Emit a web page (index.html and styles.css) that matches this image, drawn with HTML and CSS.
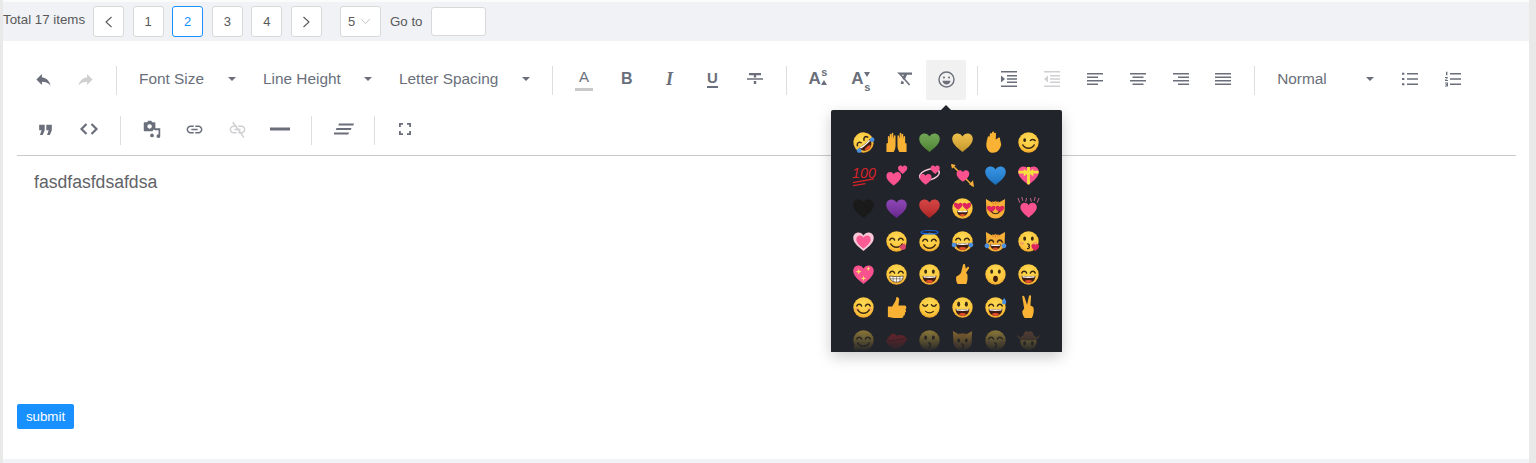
FILE: index.html
```html
<!DOCTYPE html>
<html lang="en">
<head>
    <meta charset="UTF-8">
    <meta name="viewport" content="width=device-width, initial-scale=1.0">
    <title>Editor</title>
    <link rel="stylesheet" href="styles.css">
</head>
<body>
    <!-- shared pieces for the emoji panel -->
    <svg class="defs" aria-hidden="true">
        <defs>
            <radialGradient id="skin" cx="50%" cy="35%" r="70%">
                <stop offset="0" stop-color="#fedb55"/>
                <stop offset="0.7" stop-color="#fbc53c"/>
                <stop offset="1" stop-color="#ee9a25"/>
            </radialGradient>
            <linearGradient id="shade" x1="0" y1="0" x2="0" y2="1">
                <stop offset="0" stop-color="#fff" stop-opacity=".12"/>
                <stop offset="1" stop-color="#000" stop-opacity=".18"/>
            </linearGradient>
            <g id="face"><circle cx="12" cy="12" r="10.6" fill="url(#skin)"/></g>
            <g id="cat"><path d="M2 2l6 3.4a12 12 0 0 1 8 0L22 2l-.4 9.5C22 18 18 22.5 12 22.5S2 18 2.400 11.500z" fill="#f6b037"/><path d="M12 4v4M9 4.500l.7 3M15 4.500l-.7 3M2.500 13l3 .6M21.500 13l-3 .6" stroke="#d9822b" fill="none"/></g>
            <g id="heart"><path d="M12 22C5 16.500 1.300 12.800 1.300 8.200 1.300 4.900 3.800 2.600 6.800 2.600c2.100 0 4 1.100 5.200 3.100 1.200-2 3.100-3.100 5.200-3.100 3 0 5.500 2.300 5.500 5.600 0 4.600-3.700 8.300-10.700 13.800z"/></g>
            <g id="eyes-dot" fill="#3b2a14"><ellipse cx="8" cy="9" rx="1.500" ry="2.200"/><ellipse cx="16" cy="9" rx="1.500" ry="2.200"/></g>
            <g id="eyes-arc" fill="none" stroke="#3b2a14" stroke-width="1.600" stroke-linecap="round"><path d="M5 10.500c1-2.600 4-2.600 5 0M14 10.500c1-2.600 4-2.600 5 0"/></g>
            <g id="eyes-down" fill="none" stroke="#3b2a14" stroke-width="1.400" stroke-linecap="round"><path d="M5 9c1 2.200 4 2.200 5 0M14 9c1 2.200 4 2.200 5 0"/></g>
            <g id="mouth-open"><path d="M4.800 13.300c4.800 1.100 9.600 1.100 14.400 0 0 4.600-3.200 7.500-7.200 7.500s-7.200-2.900-7.200-7.500z" fill="#3f1d12"/><path d="M5.600 13.500c4 .8 8.800.8 12.800 0l-.3 1.700c-4 .6-8.200.6-12.200 0z" fill="#fff"/><path d="M8 18.800c2.400-1.500 5.600-1.500 8 0-2.400 2.600-5.600 2.600-8 0z" fill="#e8502f"/></g>
            <g id="mouth-smile"><path d="M6 14.500c2.600 4.600 9.400 4.600 12 0" fill="none" stroke="#3b2a14" stroke-width="1.500" stroke-linecap="round"/></g>
            <g id="mouth-kiss"><path d="M11 14.500c2.500.3 2.500 2.300.6 2.500 2 .3 2 2.300-.6 2.500" fill="none" stroke="#3b2a14" stroke-width="1.300" stroke-linecap="round"/></g>
            <g id="heart-eyes" fill="#e0245e"><path d="M7.500 13.300C4.800 11.300 3 9.800 3 8c0-2 2.800-2.700 4.500-.6C9.200 5.300 12 6 12 8c0 1.800-1.800 3.300-4.500 5.300z"/><path d="M16.500 13.300C13.800 11.300 12 9.800 12 8c0-2 2.800-2.700 4.500-.6C18.200 5.300 21 6 21 8c0 1.800-1.800 3.300-4.500 5.300z"/></g>
            <g id="tears" fill="#4a8fe0"><path d="M1 14c1.500-1.300 3.700-1 4.600 1 .5 2-1.500 3.500-3.300 2.800C.8 17.200.4 15.500 1 14z"/><path d="M23 14c-1.500-1.300-3.700-1-4.600 1-.5 2 1.500 3.500 3.300 2.800 1.500-.6 1.900-2.300 1.300-3.800z"/></g>
            <g id="cheeks" fill="#f3827a" opacity=".55"><ellipse cx="5.200" cy="14" rx="2.300" ry="1.500"/><ellipse cx="18.800" cy="14" rx="2.300" ry="1.500"/></g>
            <g id="hand" fill="#f9b233"><path d="M5 21C2 18 2 14 3 10l1-4c.3-1 1.800-.7 1.700.5l.5-3.500c.2-1.200 2-1 2 .2l.3-2c.2-1.200 2-1 2 .2l.2 1c.4-1 1.900-.6 1.800.5l-.2 6 3-2c1-.6 2 .6 1.300 1.500L18 14c-1 4-3 7-5 8-3 1-6 1-8-1z"/></g>
            <g id="raised" fill="#f9b233"><path d="M1.500 22V13l1.500-.5V6c0-1 1.600-1 1.700 0l.3 3V3.500c0-1 1.600-1 1.700 0L7 8V2.500c0-1 1.700-1 1.700 0V8l.8-3c.3-1 1.700-.7 1.500.4V15c0 3-1 5-2 7z"/></g>
        </defs>
    </svg>

    <div class="page">
        <div class="pager">
            <span class="pager-total">Total 17 items</span>
            <a class="page-item"><svg class="pager-arrow" viewBox="0 0 12 12"><path d="M8.500 1L3 6l5.500 5"/></svg></a>
            <a class="page-item">1</a>
            <a class="page-item active">2</a>
            <a class="page-item">3</a>
            <a class="page-item">4</a>
            <a class="page-item"><svg class="pager-arrow" viewBox="0 0 12 12"><path d="M3.500 1L9 6l-5.500 5"/></svg></a>
            <div class="page-size">5<svg class="size-arrow" viewBox="0 0 12 8"><path d="M1 1l5 5.500L11 1"/></svg></div>
            <span class="goto-label">Go to</span>
            <input class="goto-input" type="text">
        </div>

        <div class="content">
            <div class="toolbar">
                <div class="tool-row">
                    <button class="tool-btn first"><svg class="icon m" viewBox="0 0 24 24"><path d="M10 9V5l-7 7 7 7v-4.100c5 0 8.500 1.600 11 5.100-1-5-4-10-11-11z"/></svg></button>
                    <button class="tool-btn tight disabled"><svg class="icon m" viewBox="0 0 24 24"><path d="M14 9V5l7 7-7 7v-4.100c-5 0-8.500 1.600-11 5.100 1-5 4-10 11-11z"/></svg></button>
                    <span class="sep near"></span>
                    <button class="tool-drop font-size">Font Size<i class="caret"></i></button>
                    <button class="tool-drop line-height">Line Height<i class="caret"></i></button>
                    <button class="tool-drop letter-spacing">Letter Spacing<i class="caret"></i></button>
                    <span class="sep"></span>
                    <button class="tool-btn"><span class="glyph color-a">A</span></button>
                    <button class="tool-btn"><span class="glyph bold-b">B</span></button>
                    <button class="tool-btn"><span class="glyph italic-i">I</span></button>
                    <button class="tool-btn"><span class="glyph under-u">U</span></button>
                    <button class="tool-btn"><svg class="icon" viewBox="0 0 16 16"><path d="M2 2h12v2.200H9.200V6.500H6.800V4.200H2zM0 7.300h16v1.500H0zM6.800 10h2.400v3H6.800z"/></svg></button>
                    <span class="sep"></span>
                    <button class="tool-btn"><span class="glyph script-a">A<sup>s</sup><i class="mini-up"></i></span></button>
                    <button class="tool-btn"><span class="glyph script-a">A<sub>s</sub><i class="mini-down"></i></span></button>
                    <button class="tool-btn"><svg class="icon" viewBox="0 0 16 16"><path d="M1 1.500h15v2.200h-5L8.500 9.500 6.300 7.400l1.500-3.700H3.500L1 1.500zM4.800 11.800l1-2.400 2.200 2.100-.6 1.500H4.800zM2.500 2.500l1.200-1.100 10.500 12.100-1.200 1.100z"/></svg></button>
                    <div class="emoji-wrap">
                        <button class="tool-btn selected"><svg class="icon outline m" viewBox="0 0 24 24"><circle cx="12" cy="12" r="9.500"/><circle class="dot" cx="8.800" cy="9.500" r="1.300"/><circle class="dot" cx="15.200" cy="9.500" r="1.300"/><path class="dot" d="M6.800 13.500h10.400c-.5 3-2.700 4.700-5.200 4.700s-4.700-1.700-5.200-4.700z"/></svg></button>
                        <div class="emoji-panel">
                            <div class="emoji-grid">
                                <svg class="emoji" viewBox="0 0 24 24"><g transform="rotate(-40 12 12)"><use href="#face"/><use href="#eyes-arc"/><use href="#mouth-open"/><use href="#tears"/></g></svg>
                                <svg class="emoji" viewBox="0 0 24 24"><use href="#raised"/><use href="#raised" transform="matrix(-1 0 0 1 24 0)"/></svg>
                                <svg class="emoji green" viewBox="0 0 24 24"><use href="#heart" fill="currentColor"/><use href="#heart" fill="url(#shade)"/></svg>
                                <svg class="emoji gold" viewBox="0 0 24 24"><use href="#heart" fill="currentColor"/><use href="#heart" fill="url(#shade)"/></svg>
                                <svg class="emoji" viewBox="0 0 24 24"><use href="#hand"/></svg>
                                <svg class="emoji" viewBox="0 0 24 24"><use href="#face"/><ellipse cx="8" cy="9.500" rx="1.500" ry="2" fill="#3b2a14"/><path d="M14 10c1.500-1.500 3-1.500 5 0" fill="none" stroke="#3b2a14" stroke-width="1.500" stroke-linecap="round"/><use href="#mouth-smile"/></svg>

                                <svg class="emoji" viewBox="0 0 24 24"><text class="hundred" x="0" y="15">100</text><path d="M1 19.500L23 15.500M1 22.500L14 20.500" stroke="#d8232a" stroke-width="1.300" fill="none"/></svg>
                                <svg class="emoji pink" viewBox="0 0 24 24"><use href="#heart" fill="currentColor" transform="translate(.5 6.500) scale(.72)"/><use href="#heart" fill="currentColor" transform="translate(13 .5) scale(.45)"/></svg>
                                <svg class="emoji pink" viewBox="0 0 24 24"><ellipse cx="12" cy="11" rx="10.500" ry="5.500" fill="none" stroke="#f9c8d8" stroke-width="1.600" transform="rotate(-15 12 11)"/><use href="#heart" fill="currentColor" transform="translate(1 9) scale(.58)"/><use href="#heart" fill="currentColor" transform="translate(12.500 .5) scale(.45)"/></svg>
                                <svg class="emoji pink" viewBox="0 0 24 24"><path d="M1 1l22 22" stroke="#f6b037" stroke-width="1.500"/><path d="M0 0l5 1-4 4zM19 21l4-4 1 7z" fill="#f6b037"/><use href="#heart" fill="currentColor" transform="translate(5 5) scale(.62)"/></svg>
                                <svg class="emoji blue" viewBox="0 0 24 24"><use href="#heart" fill="currentColor"/><use href="#heart" fill="url(#shade)"/></svg>
                                <svg class="emoji pink" viewBox="0 0 24 24"><use href="#heart" fill="currentColor"/><path d="M1.500 7h21v3h-21zM10.500 3h3v18h-3z" fill="#f6e13f"/><path d="M12 9L7 5v8zM12 9l5-4v8z" fill="#f6e13f"/></svg>

                                <svg class="emoji black" viewBox="0 0 24 24"><use href="#heart" fill="currentColor"/></svg>
                                <svg class="emoji purple" viewBox="0 0 24 24"><use href="#heart" fill="currentColor"/><use href="#heart" fill="url(#shade)"/></svg>
                                <svg class="emoji red" viewBox="0 0 24 24"><use href="#heart" fill="currentColor"/><use href="#heart" fill="url(#shade)"/></svg>
                                <svg class="emoji" viewBox="0 0 24 24"><use href="#face"/><use href="#heart-eyes"/><use href="#mouth-open" transform="translate(2.400 3.500) scale(.8)"/></svg>
                                <svg class="emoji" viewBox="0 0 24 24"><use href="#cat"/><use href="#heart-eyes" transform="translate(0 3)"/><use href="#mouth-smile" transform="translate(3.600 5) scale(.7)"/></svg>
                                <svg class="emoji pink" viewBox="0 0 24 24"><use href="#heart" fill="currentColor" transform="translate(2.500 4) scale(.8)"/><path d="M3 6L1 1M6 4L5 0M9 5l1-4M15 5l-1-4M18 4l1-4M21 6l2-5" stroke="#c86a8c" stroke-width="1"/></svg>

                                <svg class="emoji" viewBox="0 0 24 24"><use href="#heart" fill="#f9c8d8"/><use href="#heart" fill="#fb5a93" transform="translate(3.600 3.900) scale(.7)"/></svg>
                                <svg class="emoji" viewBox="0 0 24 24"><use href="#face"/><use href="#eyes-arc"/><use href="#mouth-smile"/><path d="M15 17l5-3c2 1 2.500 4 1 6-2 1-4 1-5-.5z" fill="#d9456b"/></svg>
                                <svg class="emoji" viewBox="0 0 24 24"><g transform="translate(0 1.500) scale(1 .93)"><use href="#face"/></g><use href="#eyes-arc" transform="translate(0 1)"/><use href="#mouth-smile" transform="translate(0 1)"/><ellipse cx="12" cy="2.300" rx="9" ry="1.800" fill="none" stroke="#1564e8" stroke-width="1.200"/></svg>
                                <svg class="emoji" viewBox="0 0 24 24"><use href="#face"/><use href="#eyes-arc"/><use href="#mouth-open"/><use href="#tears"/></svg>
                                <svg class="emoji" viewBox="0 0 24 24"><use href="#cat"/><use href="#eyes-arc" transform="translate(0 2)"/><use href="#mouth-open" transform="translate(3 5) scale(.75)"/><use href="#tears" transform="translate(0 1)"/></svg>
                                <svg class="emoji" viewBox="0 0 24 24"><use href="#face"/><use href="#eyes-dot"/><use href="#cheeks"/><use href="#mouth-kiss"/><use href="#heart" fill="#d9245e" transform="translate(14.500 13.500) scale(.38)"/></svg>

                                <svg class="emoji pink" viewBox="0 0 24 24"><use href="#heart" fill="currentColor"/><path d="M7 6l.8 2.200L10 9l-2.200.8L7 12l-.8-2.200L4 9l2.200-.8zM17 3.500l.6 1.900 1.900.6-1.900.6-.6 1.900-.6-1.900-1.900-.6 1.900-.6zM12 13l.7 2.300 2.300.7-2.300.7L12 19l-.7-2.300L9 16l2.300-.7z" fill="#fbe36a"/></svg>
                                <svg class="emoji" viewBox="0 0 24 24"><use href="#face"/><use href="#eyes-arc"/><path d="M5 13.500c4.600.9 9.400.9 14 0 0 4.500-3 6.500-7 6.500s-7-2-7-6.500z" fill="#fff" stroke="#3b2a14" stroke-width=".7"/><path d="M5.500 16.500h13M8.500 14v6M12 14.300V20M15.500 14v6" stroke="#3b2a14" stroke-width=".5"/></svg>
                                <svg class="emoji" viewBox="0 0 24 24"><use href="#face"/><use href="#eyes-dot"/><use href="#mouth-open"/></svg>
                                <svg class="emoji" viewBox="0 0 24 24"><path d="M7 22c-1.500-2-2-5-1.500-8l2-1 2-1.500 1-1.500 2-8c.5-1.500 2.500-1 2.300.5L15.500 6l1.500-1.600c1-1 2.500 0 1.700 1.300l-3 4.500 1.300 1.500c.6 3 .3 7.300-1 10.300z" fill="#f9b233"/></svg>
                                <svg class="emoji" viewBox="0 0 24 24"><use href="#face"/><use href="#eyes-dot"/><ellipse cx="12" cy="16.500" rx="2.500" ry="3.300" fill="#3f1d12"/></svg>
                                <svg class="emoji" viewBox="0 0 24 24"><use href="#face"/><use href="#eyes-arc"/><use href="#mouth-open"/></svg>

                                <svg class="emoji" viewBox="0 0 24 24"><use href="#face"/><use href="#eyes-arc"/><use href="#cheeks"/><use href="#mouth-smile"/></svg>
                                <svg class="emoji" viewBox="0 0 24 24"><path d="M3 11h4.500L11 5l1-4c2 0 3.500 1.500 2.500 5L14 10h6.500c2 0 2.300 3 .8 4 1.200 1.200.7 3-.6 3.500.6 1.500-.2 3-1.500 3.200.2 1.500-.8 2.300-2.200 2.300H9c-2 0-3-1-6-1z" fill="#f9b233"/></svg>
                                <svg class="emoji" viewBox="0 0 24 24"><use href="#face"/><use href="#eyes-down"/><path d="M8 16c2 2 6 2 8 0" fill="none" stroke="#3b2a14" stroke-width="1.300" stroke-linecap="round"/></svg>
                                <svg class="emoji" viewBox="0 0 24 24"><use href="#face"/><ellipse cx="8" cy="8.500" rx="1.600" ry="2.800" fill="#3b2a14"/><ellipse cx="16" cy="8.500" rx="1.600" ry="2.800" fill="#3b2a14"/><use href="#mouth-open"/></svg>
                                <svg class="emoji" viewBox="0 0 24 24"><use href="#face"/><use href="#eyes-arc"/><use href="#mouth-open"/><path d="M21 2c2 2.500 2.500 4 2 5.500-.6 1.500-3.400 1.500-4 0-.5-1.500 0-3 2-5.500z" fill="#4a8fe0"/></svg>
                                <svg class="emoji" viewBox="0 0 24 24"><path d="M8 23c-1.500-2-2.500-4-2.500-7l2-3-2-12c-.2-1.300 1.800-1.700 2.200-.3L10.500 9l2-9c.3-1.300 2.300-1 2.200.4L14 10l3 1.500c1 3 .5 8-1.500 11.500z" fill="#f9b233"/></svg>

                                <svg class="emoji" viewBox="0 0 24 24"><use href="#face"/><use href="#eyes-arc"/><use href="#mouth-smile"/><use href="#hand" transform="translate(1 15) scale(.35)"/></svg>
                                <svg class="emoji" viewBox="0 0 24 24"><path d="M1 13C5 5 9 3 12 7c4-2 9 0 11 3-3 9-9 11-14 10-3-1-6-3-8-7z" fill="#c8232c"/><path d="M3 13c5-1 12-2 18-3" stroke="#7c1118" fill="none"/></svg>
                                <svg class="emoji" viewBox="0 0 24 24"><use href="#face"/><use href="#eyes-dot"/><use href="#mouth-kiss"/></svg>
                                <svg class="emoji" viewBox="0 0 24 24"><use href="#cat"/><use href="#eyes-dot" transform="translate(0 3)"/><use href="#cheeks" transform="translate(0 2)"/><use href="#mouth-kiss" transform="translate(0 1)"/></svg>
                                <svg class="emoji" viewBox="0 0 24 24"><use href="#face"/><use href="#eyes-arc"/><use href="#cheeks"/><use href="#mouth-kiss"/></svg>
                                <svg class="emoji" viewBox="0 0 24 24"><use href="#face" transform="translate(2.400 4) scale(.8)"/><path d="M0 6c3 3 6 3 6 3 .5-4 2-8 6-6 4-2 5.500 2 6 6 0 0 3 0 6-3-1 5-5 6-12 6S1 11 0 6z" fill="#8a5a3c"/><use href="#eyes-dot" transform="translate(0 6)"/></svg>
                            </div>
                            <div class="emoji-fade"></div>
                        </div>
                    </div>
                    <span class="sep"></span>
                    <button class="tool-btn"><svg class="icon" viewBox="0 0 16 16"><path d="M0 0h16v1.500H0zM0 14.500h16V16H0zM6 4h10v1.500H6zM6 7.300h10v1.500H6zM6 10.500h10V12H6zM0 4.500L4 8l-4 3.500z"/></svg></button>
                    <button class="tool-btn disabled"><svg class="icon" viewBox="0 0 16 16"><path d="M0 0h16v1.500H0zM0 14.500h16V16H0zM6 4h10v1.500H6zM6 7.300h10v1.500H6zM6 10.500h10V12H6zM4 4.500L0 8l4 3.500z"/></svg></button>
                    <button class="tool-btn"><svg class="icon" viewBox="0 0 16 16"><path d="M0 2h16v1.600H0zM0 5.500h11v1.600H0zM0 9h16v1.600H0zM0 12.500h11v1.600H0z"/></svg></button>
                    <button class="tool-btn"><svg class="icon" viewBox="0 0 16 16"><path d="M0 2h16v1.600H0zM2.500 5.500h11v1.600h-11zM0 9h16v1.600H0zM2.500 12.500h11v1.600h-11z"/></svg></button>
                    <button class="tool-btn"><svg class="icon" viewBox="0 0 16 16"><path d="M0 2h16v1.600H0zM5 5.500h11v1.600H5zM0 9h16v1.600H0zM5 12.500h11v1.600H5z"/></svg></button>
                    <button class="tool-btn"><svg class="icon" viewBox="0 0 16 16"><path d="M0 2h16v1.600H0zM0 5.500h16v1.600H0zM0 9h16v1.600H0zM0 12.500h16v1.600H0z"/></svg></button>
                    <span class="sep near"></span>
                    <button class="tool-drop heading">Normal<i class="caret"></i></button>
                    <button class="tool-btn"><svg class="icon" viewBox="0 0 16 16"><path d="M5 2h11v1.600H5zM5 7.200h11v1.600H5zM5 12.400h11V14H5zM0 1.800h2.400v2H0zM0 7h2.400v2H0zM0 12.200h2.400v2H0z"/></svg></button>
                    <button class="tool-btn"><svg class="icon" viewBox="0 0 16 16"><path d="M5 2h11v1.600H5zM5 7.200h11v1.600H5zM5 12.400h11V14H5zM1 .8h1.400v3.400H1zM0 6h2.800v1L1 9h2v1H0V9l1.800-2H0zM0 11.500h3v4H0v-1h1.800v-.5H.7v-1h1.100v-.5H0z"/></svg></button>
                </div>

                <div class="tool-row second">
                    <button class="tool-btn first"><svg class="icon m" viewBox="0 0 24 24"><path d="M4 6h7v7l-2.500 6H5l2-6H4zM13 6h7v7l-2.500 6H14l2-6h-3z"/></svg></button>
                    <button class="tool-btn"><svg class="icon outline thick" viewBox="0 0 24 24"><path d="M9 6l-6 6 6 6M15 6l6 6-6 6"/></svg></button>
                    <span class="sep"></span>
                    <button class="tool-btn"><svg class="icon media" viewBox="0 0 24 24"><path d="M7 1h4l1.500 2H15c1 0 1.500.5 1.500 1.500V13H14l-1.500 2H2.500C1.500 15 1 14.500 1 13.500v-9C1 3.500 1.500 3 2.500 3h3zM8.800 5.500a3 3 0 1 0 .01 0z"/><path d="M16 11h7v10.500a2.500 2.500 0 1 1-2.300-2.500V13.500H16z"/><circle cx="12" cy="20.500" r="2.500"/></svg></button>
                    <button class="tool-btn"><svg class="icon m" viewBox="0 0 24 24"><path d="M3.900 12c0-1.710 1.390-3.100 3.100-3.100h4V7H7c-2.760 0-5 2.240-5 5s2.240 5 5 5h4v-1.900H7c-1.710 0-3.100-1.390-3.100-3.100zM8 13h8v-2H8v2zm9-6h-4v1.900h4c1.710 0 3.100 1.390 3.100 3.100s-1.390 3.100-3.100 3.100h-4V17h4c2.760 0 5-2.240 5-5s-2.240-5-5-5z"/></svg></button>
                    <button class="tool-btn disabled"><svg class="icon m" viewBox="0 0 24 24"><path d="M3.900 12c0-1.710 1.390-3.100 3.100-3.100h4V7H7c-2.760 0-5 2.240-5 5s2.240 5 5 5h4v-1.900H7c-1.710 0-3.100-1.390-3.100-3.100zM8 13h8v-2H8v2zm9-6h-4v1.900h4c1.710 0 3.100 1.390 3.100 3.100s-1.390 3.100-3.100 3.100h-4V17h4c2.760 0 5-2.240 5-5s-2.240-5-5-5z"/><path d="M5.400 3.400l1.400-1.400 14 19.400-1.400 1.400z"/></svg></button>
                    <button class="tool-btn"><svg class="icon wide" viewBox="0 0 20 16"><path d="M0 6.500h20v3H0z"/></svg></button>
                    <span class="sep after-hr"></span>
                    <button class="tool-btn"><svg class="icon wide" viewBox="0 0 20 16"><path d="M5 2.500h15l-.7 2H4.300zM2.500 7h15l-.7 2h-15zM0 11.500h15l-.7 2H0z"/></svg></button>
                    <span class="sep narrow"></span>
                    <button class="tool-btn"><svg class="icon small" viewBox="0 0 12 12"><path d="M0 0h4v1.800H1.800V4H0zM8 0h4v4h-1.800V1.800H8zM0 8h1.800v2.200H4V12H0zM10.200 8H12v4H8v-1.800h2.200z"/></svg></button>
                </div>
            </div>

            <div class="editor-body">fasdfasfdsafdsa</div>
            <button class="submit-btn">submit</button>
        </div>
    </div>
</body>
</html>
```

FILE: styles.css
```css
html, body {
    margin: 0;
    padding: 0;
}
body {
    background-color: #e9e9e9;
    font-family: "Liberation Sans", Arial, sans-serif;
    height: 463px;
    overflow: hidden;
}
.defs {
    display: block;
    width: 0;
    height: 0;
}
.page {
    margin: 0 7px 0 3px;
    height: 463px;
    box-sizing: border-box;
    background-color: #f0f2f5;
    border-top: 2px solid #fbfbfb;
    display: flex;
    flex-direction: column;
}

/* pagination */
.pager {
    display: flex;
    align-items: center;
    height: 39px;
    flex-shrink: 0;
    color: #595959;
    font-size: 13.3px;
}
.pager-total {
    width: 90px;
    margin-top: -4px;
}
.page-item {
    width: 29px;
    height: 29px;
    display: flex;
    align-items: center;
    justify-content: center;
    margin-right: 8.6px;
    background-color: #fff;
    border: 1px solid #d9d9d9;
    border-radius: 3px;
    font-size: 13px;
    color: #595959;
    box-sizing: content-box;
}
.page-item.active {
    border-color: #1890ff;
    color: #1890ff;
}
.pager-arrow {
    width: 12px;
    height: 12px;
    fill: none;
    stroke: #595959;
    stroke-width: 1.1;
}
.page-size {
    height: 29px;
    margin-left: 9.4px;
    padding-left: 7px;
    box-sizing: content-box;
    width: 32px;
    display: flex;
    align-items: center;
    gap: 5px;
    background-color: #fff;
    border: 1px solid #d9d9d9;
    border-radius: 3px;
    font-size: 13px;
}
.size-arrow {
    width: 11px;
    height: 7px;
    fill: none;
    stroke: #bfbfbf;
    stroke-width: 1;
}
.goto-label {
    margin-left: 9px;
    width: 41px;
    font-size: 13.3px;
}
.goto-input {
    width: 53px;
    height: 27px;
    padding: 0;
    background-color: #fff;
    border: 1px solid #d9d9d9;
    border-radius: 3px;
}

/* editor */
.content {
    background-color: #fff;
    height: 418px;
    flex-shrink: 0;
    padding: 0 13px 0 14px;
    box-sizing: border-box;
}
.toolbar {
    padding-top: 19px;
    height: 115px;
    box-sizing: border-box;
    border-bottom: 1px solid #c9c9c9;
}
.tool-row {
    display: flex;
    align-items: center;
    height: 40px;
    padding-left: 6px;
}
.tool-row.second {
    margin-top: 10px;
    padding-left: 8px;
}
.tool-row button {
    font-family: inherit;
    border: 0;
    padding: 0;
    background: none;
    color: #6a6f7b;
    cursor: pointer;
}
.tool-btn {
    width: 40px;
    height: 40px;
    margin-right: 2.8px;
    display: flex;
    align-items: center;
    justify-content: center;
    flex-shrink: 0;
    border-radius: 2px;
}
.tool-btn:last-child {
    margin-right: 0;
}
.tool-btn.tight {
    margin-right: 0;
}
.tool-btn.first {
    margin-right: 2px;
}
.second .tool-btn.first {
    margin-right: 4px;
}
.tool-row button.selected {
    background-color: #f1f1f1;
    margin-right: 0;
}
.tool-row .disabled {
    color: #d0d0d3;
}
.sep {
    width: 1px;
    height: 29px;
    margin: 0 11px 0 10px;
    background-color: #dedede;
    flex-shrink: 0;
}
.tool-row .tool-btn + .sep {
    margin-left: 8px;
}
.tool-row .tight + .sep,
.tool-row .emoji-wrap + .sep {
    margin-left: 11px;
}
.tool-row .sep.near {
    margin-right: 10px;
}
.tool-row .sep.after-hr {
    margin-right: 12px;
}
.tool-row .sep.narrow {
    margin-left: 7px;
    margin-right: 10px;
}
.icon {
    width: 16px;
    height: 16px;
    margin-top: -2px;
    fill: currentColor;
}
.icon.m {
    width: 19px;
    height: 19px;
}
.icon.wide {
    width: 20px;
}
.icon.small {
    width: 12px;
    height: 12px;
}
.icon.outline {
    fill: none;
    stroke: currentColor;
    stroke-width: 1.800;
}
.icon.outline.thick {
    width: 20px;
    height: 20px;
    stroke-width: 2.600;
}
.icon.outline .dot {
    fill: currentColor;
    stroke: none;
}
.icon.media {
    width: 18px;
    height: 18px;
    fill-rule: evenodd;
}
.tool-drop {
    height: 40px;
    display: flex;
    align-items: center;
    justify-content: space-between;
    padding: 0 12px 2px !important;
    font-size: 15.4px;
    margin-right: 3px;
    flex-shrink: 0;
    box-sizing: border-box;
}
.font-size { width: 121px; }
.line-height { width: 133px; }
.letter-spacing { width: 155px; margin-right: 0; }
.heading { width: 121px; margin-right: 4px; }
.caret {
    width: 0;
    height: 0;
    border-left: 4px solid transparent;
    border-right: 4px solid transparent;
    border-top: 4px solid #6a6f7b;
}

/* text style buttons, real letters standing in for the icon font */
.glyph {
    font-weight: bold;
    font-size: 16px;
    line-height: 16px;
    margin-top: -2px;
    position: relative;
    display: inline-block;
}
.color-a {
    font-weight: normal;
    font-size: 15px;
    padding: 0 4px 3px;
    margin-top: 0;
    border-bottom: 3px solid #c9c9c9;
}
.italic-i {
    font-family: "Liberation Serif", serif;
    font-style: italic;
    font-size: 18px;
}
.under-u {
    font-size: 15px;
    padding-bottom: 1px;
    border-bottom: 2px solid currentColor;
    line-height: 14px;
}
.script-a {
    font-size: 17px;
    width: 19px;
    text-align: left;
}
.script-a sup,
.script-a sub {
    font-size: 11px;
    font-weight: bold;
    line-height: 0;
    position: absolute;
    right: 0;
}
.script-a sup { top: 1px; }
.script-a sub { bottom: 0; }
.mini-up,
.mini-down {
    position: absolute;
    right: 0;
    width: 0;
    height: 0;
    border-left: 3px solid transparent;
    border-right: 3px solid transparent;
}
.mini-up {
    bottom: 2px;
    border-bottom: 5px solid #6a6f7b;
}
.mini-down {
    top: 1px;
    border-top: 5px solid #6a6f7b;
}

/* emoji dropdown */
.emoji-wrap {
    position: relative;
    flex-shrink: 0;
}
.emoji-panel {
    position: absolute;
    left: -95.5px;
    top: 50px;
    width: 231px;
    height: 242px;
    background-color: #21242a;
    border-radius: 2px;
    box-shadow: 0 5px 15px rgba(0,0,0,0.2);
    z-index: 5;
}
.emoji-panel::before {
    content: "";
    position: absolute;
    left: 110px;
    top: -5px;
    border-left: 5px solid transparent;
    border-right: 5px solid transparent;
    border-bottom: 5px solid #21242a;
}
.emoji-grid {
    display: grid;
    grid-template-columns: repeat(6, 33px);
    grid-auto-rows: 33px;
    padding: 16px 0 0 16px;
    height: 226px;
    overflow: hidden;
    justify-items: center;
    align-items: center;
}
.emoji {
    width: 23px;
    height: 23px;
    overflow: visible;
}
.emoji-fade {
    position: absolute;
    left: 0;
    right: 0;
    bottom: 0;
    height: 32px;
    background: linear-gradient(to bottom, rgba(33,36,42,0), rgba(33,36,42,0.5) 30%, #21242a 100%);
}
.hundred {
    font-family: "Liberation Sans", Arial, sans-serif;
    font-style: italic;
    font-size: 15px;
    fill: #d8232a;
}
.green { color: #5c9a3c; }
.gold { color: #eab532; }
.pink { color: #f9528f; }
.blue { color: #1d85e0; }
.black { color: #1a1a1a; }
.purple { color: #7b2ca8; }
.red { color: #cf2a2a; }

.editor-body {
    padding: 15px 17px 0;
    height: 232px;
    box-sizing: border-box;
    font-size: 17.6px;
    line-height: 22px;
    color: #5f6368;
}
.submit-btn {
    display: block;
    width: 57px;
    height: 25px;
    padding: 0;
    border: 0;
    border-radius: 2px;
    background-color: #1890ff;
    color: #fff;
    font-family: inherit;
    font-size: 13.3px;
    cursor: pointer;
    margin-top: 16px;
}
```
